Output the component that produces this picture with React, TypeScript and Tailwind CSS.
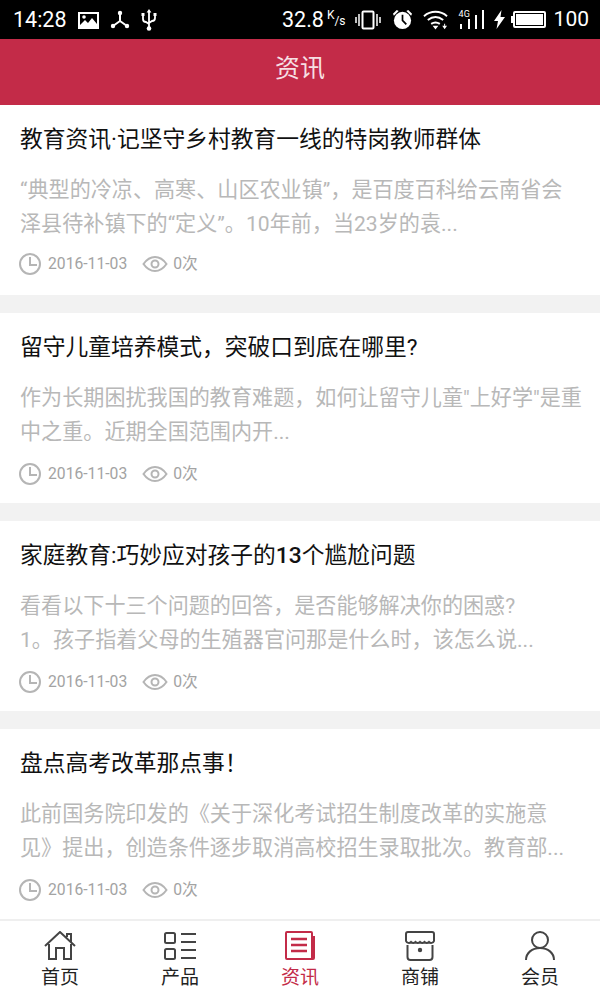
const articles = [
  {
    title: <>教育资讯·记坚守乡村教育一线的特岗教师群体</>,
    lines: ['“典型的冷凉、高寒、山区农业镇”，是百度百科给云南省会', '泽县待补镇下的“定义”。10年前，当23岁的袁...'],
  },
  {
    title: <>留守儿童培养模式，突破口到底在哪里?</>,
    lines: ['作为长期困扰我国的教育难题，如何让留守儿童"上好学"是重', '中之重。近期全国范围内开...'],
  },
  {
    title: <>家庭教育:巧妙应对孩子的<span className="font-medium">13</span>个尴尬问题</>,
    lines: ['看看以下十三个问题的回答，是否能够解决你的困惑?', '1。孩子指着父母的生殖器官问那是什么时，该怎么说...'],
  },
  {
    title: <>盘点高考改革那点事！</>,
    lines: ['此前国务院印发的《关于深化考试招生制度改革的实施意', '见》提出，创造条件逐步取消高校招生录取批次。教育部...'],
  },
]

function StatusBar() {
  return (
    <div className="flex h-[39px] items-center justify-between bg-black pl-[13px] pr-[11px] text-white">
      <div className="flex items-center">
        <span className="text-[21.500px] leading-none">14:28</span>
        {/* picture */}
        <svg className="ml-[11px]" width="22" height="18" viewBox="0 0 22 18">
          <path fill="#fff" fillRule="evenodd" d="M0 1h21v17H0zM2 3v11l5-5 3 3 4-5 5 6V3z" />
          <circle cx="6" cy="6" r="1.8" fill="#fff" />
        </svg>
        {/* nodes */}
        <svg className="ml-[10px]" width="20" height="20" viewBox="0 0 20 20">
          <path stroke="#fff" strokeWidth="2" fill="none" d="M10 3v8M10 11l-7 5M10 11l7 5" />
          <circle cx="10" cy="3" r="2.2" fill="#fff" />
          <circle cx="3" cy="16" r="2.2" fill="#fff" />
          <circle cx="17" cy="16" r="2.2" fill="#fff" />
        </svg>
        {/* usb */}
        <svg className="ml-[11px]" width="16" height="22" viewBox="0 0 16 22">
          <path stroke="#fff" strokeWidth="1.8" fill="none" d="M8 2v17M2 6v4c0 2 1 3 3 3l3 2M14 6v3c0 2-1 3-3 3l-3 2" />
          <path fill="#fff" d="M8 0l2.4 3.5h-4.800zM.5 4h3v3h-3zM12.500 4h3v3h-3z" />
          <circle cx="8" cy="19.500" r="2.300" fill="#fff" />
        </svg>
      </div>
      <div className="flex items-center">
        <span className="text-[21.500px] leading-none">32.8</span>
        <span className="ml-[3px] flex text-[12px] leading-none">
          <span className="-mt-[3px]">K</span>
          <span className="mt-[3px]">/s</span>
        </span>
        {/* vibrate */}
        <svg className="ml-[9px]" width="26" height="20" viewBox="0 0 26 20">
          <rect x="7.500" y="1.500" width="11" height="17" rx="1" fill="none" stroke="#fff" strokeWidth="2" />
          <path stroke="#fff" strokeWidth="1.500" d="M1 7v6M4 4v12M22 4v12M25 7v6" />
        </svg>
        {/* alarm */}
        <svg className="ml-[11px]" width="21" height="21" viewBox="0 0 22 22">
          <circle cx="11" cy="12" r="9" fill="#fff" />
          <path stroke="#000" strokeWidth="1.800" fill="none" d="M11 6v6l4 4" />
          <path fill="#fff" d="M1 5l4-4 2 1-5 5zM21 5l-4-4-2 1 5 5z" />
        </svg>
        {/* wifi */}
        <svg className="ml-[10px]" width="25" height="20" viewBox="0 0 26 20">
          <path stroke="#fff" strokeWidth="2" fill="none" d="M1 6c7-6 17-6 24 0M5 10c5-4 11-4 16 0M8.500 14c3-2 6-2 9 0" />
          <path fill="#fff" d="M10 16h6l-3 4zM20 16h2v-2h1v2h2l-2.500 3.500z" />
        </svg>
        {/* signal */}
        <div className="relative ml-[10px] h-[19px] w-[27px]">
          <span className="absolute left-[1px] top-0 text-[9px] leading-none">4G</span>
          <svg className="absolute inset-0" width="27" height="19" viewBox="0 0 27 19">
            <path stroke="#fff" strokeWidth="2" d="M3 19v-5M11 19V9M18 19V5M25 19V0" />
          </svg>
        </div>
        {/* charging bolt */}
        <svg className="ml-[9px]" width="11" height="19" viewBox="0 0 11 19">
          <path fill="#fff" d="M7.500 0L0 11h4l-1.500 8L11 7H6.500z" />
        </svg>
        {/* battery */}
        <div className="ml-[6px] flex items-center">
          <div className="h-[7px] w-[2px] bg-white" />
          <div className="h-[17px] w-[33px] rounded-[2px] border-2 border-white p-[1px]">
            <div className="h-full w-full bg-white" />
          </div>
        </div>
        <span className="ml-[8px] text-[21px] leading-none">100</span>
      </div>
    </div>
  )
}

function Meta({ first }: { first: boolean }) {
  return (
    <div className={`flex h-[26px] items-center text-[15.700px] text-[#a3a3a3] ${first ? 'mt-[10px]' : 'mt-[12px]'}`}>
      <svg width="24" height="24" viewBox="0 0 24 24" fill="none" stroke="#b5b5b5" strokeWidth="2" className="-ml-[2px]">
        <circle cx="12" cy="12" r="10" />
        <path d="M12 5v8h7" />
      </svg>
      <span className="ml-[6px]">2016-11-03</span>
      <svg width="26" height="18" viewBox="0 0 26 18" fill="none" stroke="#b5b5b5" strokeWidth="2" className="ml-[15px]">
        <path d="M1.500 9C5 4 9 2 13 2s8 2 11.500 7C21 14 17 16 13 16S5 14 1.500 9z" />
        <circle cx="13" cy="9" r="3.500" />
      </svg>
      <span className="ml-[5px]">0次</span>
    </div>
  )
}

function NavItem({ label, active, children }: { label: string; active?: boolean; children: React.ReactNode }) {
  return (
    <div className="flex flex-1 flex-col items-center">
      <div className="flex h-[32px] items-center justify-center">{children}</div>
      <span className={`mt-[4px] text-[19px] leading-[24px] ${active ? 'text-[#c32b48]' : 'text-[#222]'}`}>{label}</span>
    </div>
  )
}

export default function App() {
  return (
    <div className="flex h-[1000px] w-[600px] flex-col overflow-hidden bg-white font-['Roboto','Noto_Sans_CJK_SC',sans-serif]">
      <StatusBar />
      <div className="flex h-[66px] items-center justify-center bg-[#c32b48] pb-[6px] text-[25px] text-[#f6dfe3]">资讯</div>

      <div className="flex-1 overflow-hidden">
        {articles.map((a, i) => (
          <div key={i} className={`px-[20px] pt-[19px] ${i < 3 ? 'h-[208px] border-b-[18px] border-[#f2f2f2]' : 'h-[190px]'}`}>
            <h3 className="whitespace-nowrap text-[22.750px] leading-[32px] text-[#111]">{a.title}</h3>
            <div className="mt-[17px] whitespace-nowrap text-[21.100px] leading-[34px] text-[#b8b8b8]">
              {a.lines.map((l, j) => (
                <div key={j}>{l}</div>
              ))}
            </div>
            <Meta first={i === 0} />
          </div>
        ))}
      </div>

      <div className="flex h-[81px] shrink-0 border-t-2 border-[#efefef] bg-white pt-[9px]">
        <NavItem label="首页">
          <svg width="32" height="30" viewBox="0 0 32 30" fill="none" stroke="#444" strokeWidth="2">
            <path d="M1 15L16 1l15 14M5 13v15h7V17h8v11h7V13M23 6V3h4v8" />
          </svg>
        </NavItem>
        <NavItem label="产品">
          <svg width="32" height="30" viewBox="0 0 32 30" fill="none" stroke="#444" strokeWidth="2">
            <rect x="1" y="2" width="10" height="10" rx="1.500" />
            <rect x="1" y="18" width="10" height="10" rx="1.500" />
            <path d="M17 3h15M17 11h15M17 19h15M17 27h15" />
          </svg>
        </NavItem>
        <NavItem label="资讯" active>
          <svg width="30" height="30" viewBox="0 0 30 30" fill="none" stroke="#c32b48" strokeWidth="2">
            <path d="M2 1h24a1 1 0 0 1 1 1v25a1 1 0 0 1-1 1H2a1 1 0 0 1-1-1V2a1 1 0 0 1 1-1z" />
            <path d="M27 6h2v21a1 1 0 0 1-1 1h-3" />
            <path strokeWidth="2.500" d="M6 8h16M6 14h16M6 20h16" />
          </svg>
        </NavItem>
        <NavItem label="商铺">
          <svg width="30" height="30" viewBox="0 0 30 30" fill="none" stroke="#444" strokeWidth="2">
            <path d="M3 1h24a2 2 0 0 1 2 2v7a3 3 0 0 1-5 1 3 3 0 0 1-4.500 0 3 3 0 0 1-4.500 0 3 3 0 0 1-4.500 0 3 3 0 0 1-4.500 0 3 3 0 0 1-5-1V3a2 2 0 0 1 2-2z" />
            <path d="M2.500 14v12a3 3 0 0 0 3 3h19a3 3 0 0 0 3-3V14" />
            <circle cx="15" cy="19" r="2.200" fill="#444" stroke="none" />
          </svg>
        </NavItem>
        <NavItem label="会员">
          <svg width="30" height="30" viewBox="0 0 30 30" fill="none" stroke="#444" strokeWidth="2">
            <circle cx="15" cy="9" r="8" />
            <path d="M1 29c0-7 6-12 14-12s14 5 14 12" />
          </svg>
        </NavItem>
      </div>
    </div>
  )
}
